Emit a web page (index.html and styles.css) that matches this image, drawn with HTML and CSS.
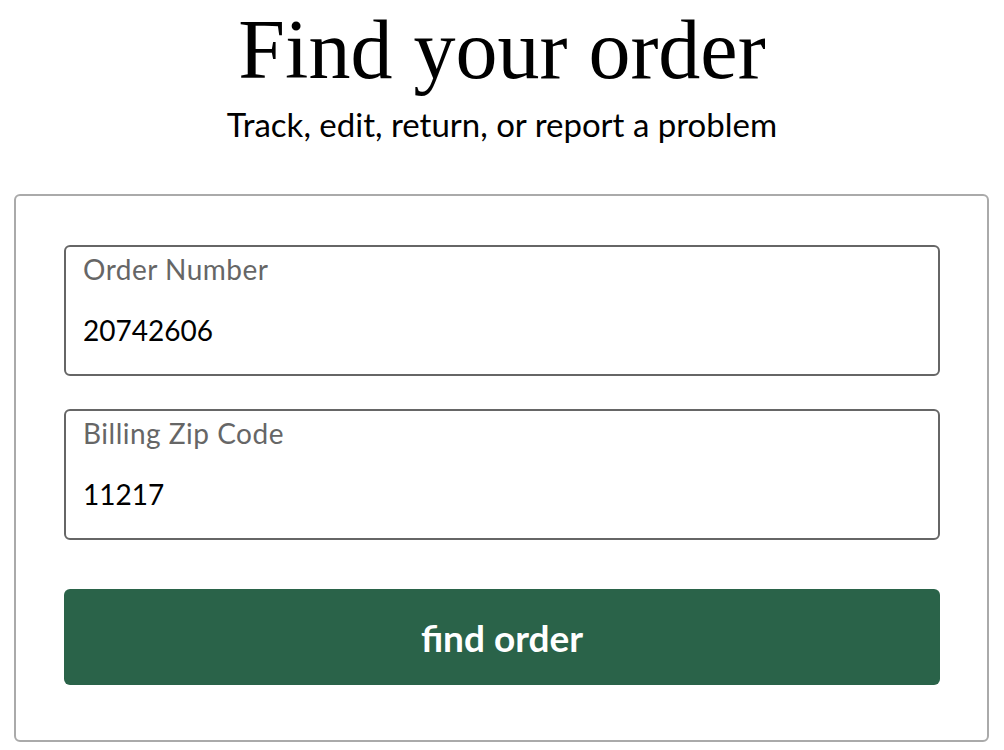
FILE: index.html
```html
<!DOCTYPE html>
<html lang="en">
<head>
  <meta charset="UTF-8">
  <meta name="viewport" content="width=device-width, initial-scale=1.0">
  <title>Find your order</title>
  <link rel="stylesheet" href="styles.css">
</head>
<body>
  <header class="intro">
    <h1>Find your order</h1>
    <p>Track, edit, return, or report a problem</p>
  </header>
  <form class="card" onsubmit="return false">
    <label class="field">
      <span class="field-label">Order Number</span>
      <input type="text" value="20742606">
    </label>
    <label class="field">
      <span class="field-label">Billing Zip Code</span>
      <input type="text" value="11217">
    </label>
    <button type="submit">find order</button>
  </form>
</body>
</html>
```

FILE: styles.css
```css
body {
  font-family: 'Lato', 'Noto Sans', sans-serif;
  margin: 0;
  padding: 0;
  background-color: white;
  color: #000;
}
.intro {
  text-align: center;
  padding-top: 5px;
}
.intro h1 {
  font-family: 'Liberation Serif', serif;
  font-weight: normal;
  font-size: 84px;
  line-height: 90px;
  margin: 0;
}
.intro p {
  font-size: 33px;
  line-height: 40px;
  margin: 9px 0 0;
}
.card {
  margin: 50px 15px 0 14px;
  padding: 49px 47px 55px 48px;
  border: 2px solid #aaa;
  border-radius: 6px;
  display: flex;
  flex-direction: column;
}
.field {
  display: flex;
  flex-direction: column;
  height: 131px;
  box-sizing: border-box;
  border: 2px solid #666;
  border-radius: 6px;
  padding: 5px 17px 0;
  margin-bottom: 33px;
}
.field-label {
  font-size: 28px;
  letter-spacing: 0.5px;
  color: #666;
  line-height: 34px;
}
.field input {
  font-family: inherit;
  font-size: 28px;
  height: 34px;
  line-height: 34px;
  border: none;
  outline: none;
  padding: 0;
  margin-top: 27px;
  color: #000;
  background: transparent;
}
button {
  margin-top: 16px;
  height: 96px;
  border: none;
  border-radius: 6px;
  background-color: #2a6349;
  color: white;
  font-family: inherit;
  font-size: 37px;
  font-weight: bold;
  cursor: pointer;
}
```
